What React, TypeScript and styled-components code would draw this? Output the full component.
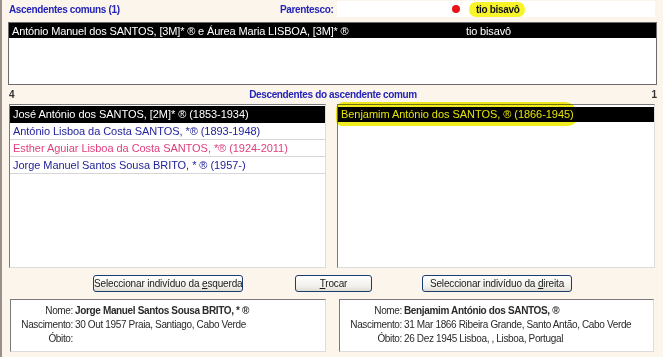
import { Fragment } from "react";
import styled, { createGlobalStyle } from "styled-components";

/* ================= STYLES ================= */

const GlobalStyle = createGlobalStyle`
  html, body {
    margin: 0;
    padding: 0;
    background: #fcf5eb;
  }
  body {
    font-family: "Liberation Sans", Arial, sans-serif;
  }
`;

const Window = styled.div`
  width: 663px;
  height: 357px;
  background: #fcf5eb;
  display: flex;
  flex-direction: column;
  overflow: hidden;
  border-left: 2px solid #9a908a;
  box-sizing: border-box;
`;

const HeaderRow = styled.div`
  height: 22px;
  display: grid;
  grid-template-columns: 278px 57px 318px;
  align-items: center;
`;

const Heading = styled.span<{ $align?: string }>`
  font-size: 10px;
  font-weight: bold;
  letter-spacing: -0.35px;
  color: #2424b8;
  text-align: ${({ $align }) => $align || "left"};
  white-space: nowrap;
`;

const TitleCell = styled(Heading)`
  padding-left: 7px;
  margin-top: -4px;
`;

const RelationField = styled.div`
  height: 16px;
  background: #ffffff;
  display: flex;
  align-items: center;
  padding-left: 115px;
  margin-top: -4px;
`;

const Dot = styled.span`
  width: 8px;
  height: 8px;
  border-radius: 50%;
  background: #e8141c;
`;

const Marker = styled.span`
  margin-left: 9px;
  padding: 2px 5px 2px 7px;
  background: #f7f52a;
  border-radius: 7px;
  font-size: 10px;
  letter-spacing: -0.3px;
  font-weight: bold;
  color: #111;
`;

const TopList = styled.div`
  margin-left: 6px;
  width: 649px;
  height: 63px;
  box-sizing: border-box;
  border: 1px solid #6b6b6b;
  background: #ffffff;
`;

const AncestorRow = styled.div`
  height: 15px;
  background: #000;
  color: #fff;
  font-size: 11px;
  letter-spacing: -0.15px;
  display: grid;
  grid-template-columns: 454px 1fr;
  align-items: center;
  padding-left: 3px;
`;

const MidRow = styled.div`
  height: 19px;
  display: grid;
  grid-template-columns: 40px 1fr 40px;
  align-items: center;
  padding: 0 6px 0 7px;
`;

const Count = styled.span<{ $right?: boolean }>`
  font-size: 10px;
  font-weight: bold;
  color: #333;
  text-align: ${({ $right }) => ($right ? "right" : "left")};
`;

const ListsRow = styled.div`
  height: 164px;
  display: flex;
  gap: 11px;
  padding-left: 7px;
`;

const ListBox = styled.div<{ $w: number }>`
  width: ${({ $w }) => $w}px;
  height: 100%;
  box-sizing: border-box;
  background: #ffffff;
  border-top: 1px solid #7a7a7a;
  border-left: 1px solid #7a7a7a;
  border-right: 1px solid #dcdcdc;
  border-bottom: 1px solid #dcdcdc;
  padding-top: 1px;
  position: relative;
`;

const PersonRow = styled.div<{ $color: string; $sel?: boolean }>`
  height: 16px;
  line-height: 16px;
  font-size: 11px;
  letter-spacing: -0.05px;
  padding-left: 3px;
  white-space: nowrap;
  color: ${({ $sel, $color }) => ($sel ? "#fff" : $color)};
  background: ${({ $sel }) => ($sel ? "#000" : "#fff")};
  border-bottom: 1px solid ${({ $sel }) => ($sel ? "#000" : "#d6d6d6")};
`;

const HighlightRow = styled(PersonRow)`
  margin-top: 1px;
  height: 14px;
  line-height: 14px;
  color: #f2f23a;
`;

const Highlighter = styled.span`
  position: absolute;
  left: -2px;
  top: -3px;
  width: 242px;
  height: 24px;
  background: #f0ee1e;
  border-radius: 8px 14px 10px 6px;
  mix-blend-mode: multiply;
  pointer-events: none;
`;

const ButtonRow = styled.div`
  height: 17px;
  margin-top: 7px;
  display: flex;
  padding-left: 91px;
`;

const Button = styled.button<{ $w: number; $gap: number }>`
  width: ${({ $w }) => $w}px;
  height: 17px;
  margin-left: ${({ $gap }) => $gap}px;
  padding: 0;
  box-sizing: border-box;
  border: 1px solid #1c3b70;
  border-radius: 3px;
  background: linear-gradient(#ffffff, #f1f0ea 70%, #dedbd2);
  font-family: "Liberation Sans", Arial, sans-serif;
  font-size: 10px;
  line-height: 14px;
  white-space: nowrap;
  color: #1a1a1a;
  letter-spacing: -0.15px;
`;

const InfoRow = styled.div`
  height: 53px;
  margin-top: 7px;
  display: flex;
  gap: 13px;
  padding-left: 8px;
`;

const InfoBox = styled.div<{ $w: number }>`
  width: ${({ $w }) => $w}px;
  box-sizing: border-box;
  background: #ffffff;
  border-top: 1px solid #7a7a7a;
  border-left: 1px solid #7a7a7a;
  border-right: 1px solid #dcdcdc;
  border-bottom: 1px solid #dcdcdc;
  padding: 5px 0 0 8px;
  display: grid;
  grid-template-columns: 54px 1fr;
  grid-auto-rows: 14px;
  column-gap: 2px;
  font-size: 10px;
  color: #2a2a2a;
  letter-spacing: -0.35px;
`;

const Label = styled.span`
  text-align: right;
  white-space: nowrap;
`;

const Value = styled.span<{ $bold?: boolean }>`
  white-space: nowrap;
  font-weight: ${({ $bold }) => ($bold ? "bold" : "normal")};
`;

/* ================= DATA ================= */

const leftPeople = [
  { name: "José António dos SANTOS, [2M]* ® (1853-1934)", color: "#fff", sel: true },
  { name: "António Lisboa da Costa SANTOS, *® (1893-1948)", color: "#23239a" },
  { name: "Esther Aguiar Lisboa da Costa SANTOS, *® (1924-2011)", color: "#e0407e" },
  { name: "Jorge Manuel Santos Sousa BRITO, * ® (1957-)", color: "#23239a" },
];

const leftInfo = [
  { label: "Nome:", value: "Jorge Manuel Santos Sousa BRITO, * ®", bold: true },
  { label: "Nascimento:", value: "30 Out 1957 Praia, Santiago, Cabo Verde" },
  { label: "Óbito:", value: "" },
];

const rightInfo = [
  { label: "Nome:", value: "Benjamim António dos SANTOS, ®", bold: true },
  { label: "Nascimento:", value: "31 Mar 1866 Ribeira Grande, Santo Antão, Cabo Verde" },
  { label: "Óbito:", value: "26 Dez 1945 Lisboa, , Lisboa, Portugal" },
];

type InfoLine = { label: string; value: string; bold?: boolean };

const InfoPanel = ({ lines, width }: { lines: InfoLine[]; width: number }) => (
  <InfoBox $w={width}>
    {lines.map((r) => (
      <Fragment key={r.label}>
        <Label>{r.label}</Label>
        <Value $bold={r.bold}>{r.value}</Value>
      </Fragment>
    ))}
  </InfoBox>
);

/* ================= COMPONENT ================= */

const App = () => {
  return (
    <>
      <GlobalStyle />
      <Window>
        <HeaderRow>
          <TitleCell>Ascendentes comuns (1)</TitleCell>
          <Heading style={{ marginTop: -4 }}>Parentesco:</Heading>
          <RelationField>
            <Dot />
            <Marker>tio bisavô</Marker>
          </RelationField>
        </HeaderRow>

        <TopList>
          <AncestorRow>
            <span>António Manuel dos SANTOS, [3M]* ® e Áurea Maria LISBOA, [3M]* ®</span>
            <span>tio bisavô</span>
          </AncestorRow>
        </TopList>

        <MidRow>
          <Count>4</Count>
          <Heading $align="center">Descendentes do ascendente comum</Heading>
          <Count $right>1</Count>
        </MidRow>

        <ListsRow>
          <ListBox $w={317}>
            {leftPeople.map((p) => (
              <PersonRow key={p.name} $color={p.color} $sel={p.sel}>
                {p.name}
              </PersonRow>
            ))}
          </ListBox>
          <ListBox $w={318}>
            <HighlightRow $color="#fff" $sel>
              Benjamim António dos SANTOS, ® (1866-1945)
            </HighlightRow>
            <Highlighter />
          </ListBox>
        </ListsRow>

        <ButtonRow>
          <Button $w={150} $gap={0}>
            Seleccionar indivíduo da <u>e</u>squerda
          </Button>
          <Button $w={77} $gap={52}>
            <u>T</u>rocar
          </Button>
          <Button $w={150} $gap={50}>
            Seleccionar indivíduo da <u>d</u>ireita
          </Button>
        </ButtonRow>

        <InfoRow>
          <InfoPanel lines={leftInfo} width={316} />
          <InfoPanel lines={rightInfo} width={315} />
        </InfoRow>
      </Window>
    </>
  );
};

export default App;
